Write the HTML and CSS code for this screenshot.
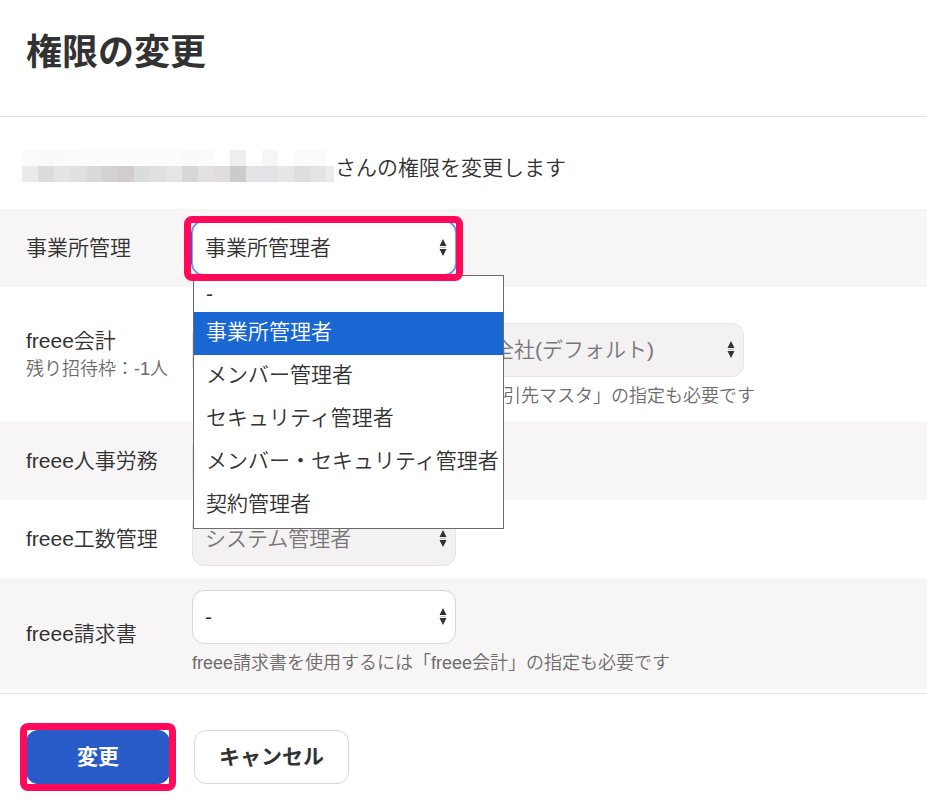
FILE: index.html
```html
<!DOCTYPE html>
<html lang="ja">
<head>
  <meta charset="UTF-8">
  <title>権限の変更</title>
  <meta name="viewport" content="width=device-width, initial-scale=1.0">
  <link rel="stylesheet" href="styles.css">
</head>
<body>
  <svg class="sprite" aria-hidden="true">
    <symbol id="arrows" viewBox="0 0 8 17">
      <path d="M4 0 L7.5 7 H0.5 Z M0.5 10 H7.5 L4 17 Z" fill="#323232"/>
      <path d="M1 8.5 H7" stroke="#bcbaba" stroke-width="1"/>
    </symbol>
  </svg>

  <header class="header">
    <h1 class="title">権限の変更</h1>
  </header>

  <form class="form">
    <p class="intro">
      <svg class="mosaic" viewBox="0 0 312 32" shape-rendering="crispEdges" aria-hidden="true">
        <path d="M0 0h16v16h-16z" fill="#fbfbfb"/>
        <path d="M16 0h16v16h-16z" fill="#f9f9f9"/>
        <path d="M32 0h16v16h-16z" fill="#fafafa"/>
        <path d="M48 0h16v16h-16z" fill="#fafcfb"/>
        <path d="M64 0h96v16h-96z" fill="#fcfcfc"/>
        <path d="M160 0h16v16h-16z" fill="#f9f9f9"/>
        <path d="M176 0h16v16h-16z" fill="#fbfbfb"/>
        <path d="M208 0h16v16h-16z" fill="#eeeeec"/>
        <path d="M240 0h16v16h-16z" fill="#f6f6f6"/>
        <path d="M272 0h32v16h-32z" fill="#fbfbfb"/>
        <path d="M0 16h16v16h-16z" fill="#e9ebed"/>
        <path d="M16 16h16v16h-16z" fill="#dcdcdc"/>
        <path d="M32 16h16v16h-16z" fill="#e4e4e4"/>
        <path d="M48 16h16v16h-16z" fill="#dfe1e0"/>
        <path d="M64 16h16v16h-16z" fill="#dadada"/>
        <path d="M80 16h16v16h-16z" fill="#d2d2d2"/>
        <path d="M96 16h16v16h-16z" fill="#d1cdce"/>
        <path d="M112 16h16v16h-16z" fill="#dbdcde"/>
        <path d="M128 16h16v16h-16z" fill="#e0e0e0"/>
        <path d="M144 16h16v16h-16z" fill="#e5e5e5"/>
        <path d="M160 16h16v16h-16z" fill="#d5d8d6"/>
        <path d="M176 16h16v16h-16z" fill="#e2e1df"/>
        <path d="M192 16h16v16h-16z" fill="#dfdddd"/>
        <path d="M208 16h16v16h-16z" fill="#cbcbcb"/>
        <path d="M224 16h32v16h-32z" fill="#e2e3e5"/>
        <path d="M256 16h16v16h-16z" fill="#e7e7e7"/>
        <path d="M272 16h16v16h-16z" fill="#dfdedc"/>
        <path d="M288 16h16v16h-16z" fill="#e4e4e4"/>
        <path d="M304 16h8v16h-8z" fill="#ebecee"/>
      </svg>
      <span>さんの権限を変更します</span>
    </p>

    <div class="row">
      <label class="row-label" for="office">事業所管理</label>
      <div class="row-body">
        <div class="field field-open">
          <select class="select select-focus" id="office">
            <option>-</option>
            <option selected>事業所管理者</option>
            <option>メンバー管理者</option>
            <option>セキュリティ管理者</option>
            <option>メンバー・セキュリティ管理者</option>
            <option>契約管理者</option>
          </select>
          <svg class="arrows"><use href="#arrows"/></svg>
          <ul class="menu" role="listbox" aria-label="事業所管理">
            <li class="menu-item menu-first" role="option">-</li>
            <li class="menu-item menu-selected" role="option" aria-selected="true">事業所管理者</li>
            <li class="menu-item" role="option">メンバー管理者</li>
            <li class="menu-item" role="option">セキュリティ管理者</li>
            <li class="menu-item" role="option">メンバー・セキュリティ管理者</li>
            <li class="menu-item" role="option">契約管理者</li>
          </ul>
        </div>
      </div>
    </div>

    <div class="row">
      <label class="row-label" for="accounting">freee会計<small class="sub">残り招待枠：-1人</small></label>
      <div class="row-body row-body-tall">
        <div class="fields">
          <div class="field">
            <select class="select" id="accounting" disabled><option>-</option></select>
          </div>
          <div class="field">
            <select class="select" aria-label="全社" disabled><option>全社(デフォルト)</option></select>
            <svg class="arrows"><use href="#arrows"/></svg>
          </div>
        </div>
        <p class="note note-indent">引先マスタ」の指定も必要です</p>
      </div>
    </div>

    <div class="row">
      <label class="row-label" for="hr">freee人事労務</label>
      <div class="row-body">
        <div class="field">
          <select class="select" id="hr" disabled><option>-</option></select>
        </div>
      </div>
    </div>

    <div class="row">
      <label class="row-label" for="workload">freee工数管理</label>
      <div class="row-body">
        <div class="field">
          <select class="select" id="workload" disabled><option>システム管理者</option></select>
          <svg class="arrows"><use href="#arrows"/></svg>
        </div>
      </div>
    </div>

    <div class="row">
      <label class="row-label" for="invoice">freee請求書</label>
      <div class="row-body">
        <div class="field">
          <select class="select" id="invoice"><option>-</option></select>
          <svg class="arrows"><use href="#arrows"/></svg>
        </div>
        <p class="note">freee請求書を使用するには「freee会計」の指定も必要です</p>
      </div>
    </div>

    <footer class="footer">
      <div class="submit">
        <button class="btn btn-primary" type="submit">変更</button>
      </div>
      <button class="btn" type="button">キャンセル</button>
    </footer>
  </form>
</body>
</html>
```
FILE: styles.css
```css
*, *::before, *::after {
  box-sizing: border-box;
}

body {
  margin: 0;
  background: #fff;
  color: #323232;
  font-family: "Liberation Sans", "Noto Sans CJK JP", sans-serif;
  font-size: 21px;
  font-weight: 350;
  line-height: 32px;
}

.sprite {
  display: none;
}

/* Header */
.header {
  padding: 26px 26px 36px;
  border-bottom: 1px solid #e4e4e4;
}

.title {
  margin: 0;
  font-size: 36px;
  font-weight: 700;
  line-height: 54px;
}

.intro {
  display: flex;
  align-items: flex-start;
  gap: 1px;
  margin: 0;
  padding: 33px 22px 24px;
  line-height: 35px;
}

.mosaic {
  width: 312px;
  height: 32px;
}

/* Rows */
.row {
  display: flex;
  align-items: center;
  padding: 12px 26px;
}

.row:nth-of-type(odd) {
  background: #f7f5f6;
}

.row-label {
  flex: 0 0 166px;
  line-height: 30px;
}

.row-body-tall {
  padding-top: 24px;
}

.sub {
  display: block;
  color: #6e6b6b;
  font-size: 18px;
  line-height: 27px;
}

.fields {
  display: flex;
  gap: 24px;
}

.field {
  position: relative;
  width: 264px;
}

.select {
  display: block;
  width: 100%;
  height: 54px;
  padding: 0 32px 0 12px;
  border: 1px solid #d7d6d6;
  border-radius: 12px;
  appearance: none;
  background: #fff;
  color: #323232;
  font: inherit;
}

.select:disabled {
  border-color: #e6e5e5;
  background: #f3f1f2;
  color: #78757a;
  opacity: 1;
}

.select-focus {
  border-color: #73b0f0;
  outline: 1px solid #285aff;
}

.arrows {
  position: absolute;
  top: 18px;
  right: 9px;
  width: 8px;
  height: 17px;
  pointer-events: none;
}

.note {
  margin: 6px 0 0;
  color: #6e6b6b;
  font-size: 18px;
  line-height: 27px;
}

.note-indent {
  padding-left: 311px;
}

/* Open list */
.menu {
  position: absolute;
  z-index: 1;
  top: 54px;
  left: 1px;
  margin: 0;
  padding: 0 0 1px;
  border: 1px solid #6b6b6b;
  background: #fff;
  list-style: none;
  white-space: nowrap;
}

.menu-item {
  padding: 0 4px 3px 12px;
  line-height: 40px;
}

.menu-first {
  padding-bottom: 0;
  line-height: 36px;
}

.menu-selected {
  background: #1967d2;
  color: #fff;
}

/* Marker frames */
.field-open::after,
.submit::after {
  content: "";
  position: absolute;
  z-index: 2;
  inset: -5px -7px -6px -8px;
  border: 7px solid #ff0a5a;
  border-radius: 8px;
  pointer-events: none;
}

.submit::after {
  inset: -7px -6px;
}

/* Footer */
.footer {
  display: flex;
  gap: 24px;
  margin-top: 4px;
  padding: 36px 26px 25px;
  border-top: 1px solid #e4e4e4;
}

.submit {
  position: relative;
}

.btn {
  height: 54px;
  padding: 0 24px;
  border: 1px solid #d7d6d6;
  border-radius: 12px;
  background: #fff;
  color: #323232;
  font: inherit;
  font-weight: 700;
}

.btn-primary {
  min-width: 144px;
  border-color: #285ac8;
  background: #285ac8;
  color: #fff;
}
```
